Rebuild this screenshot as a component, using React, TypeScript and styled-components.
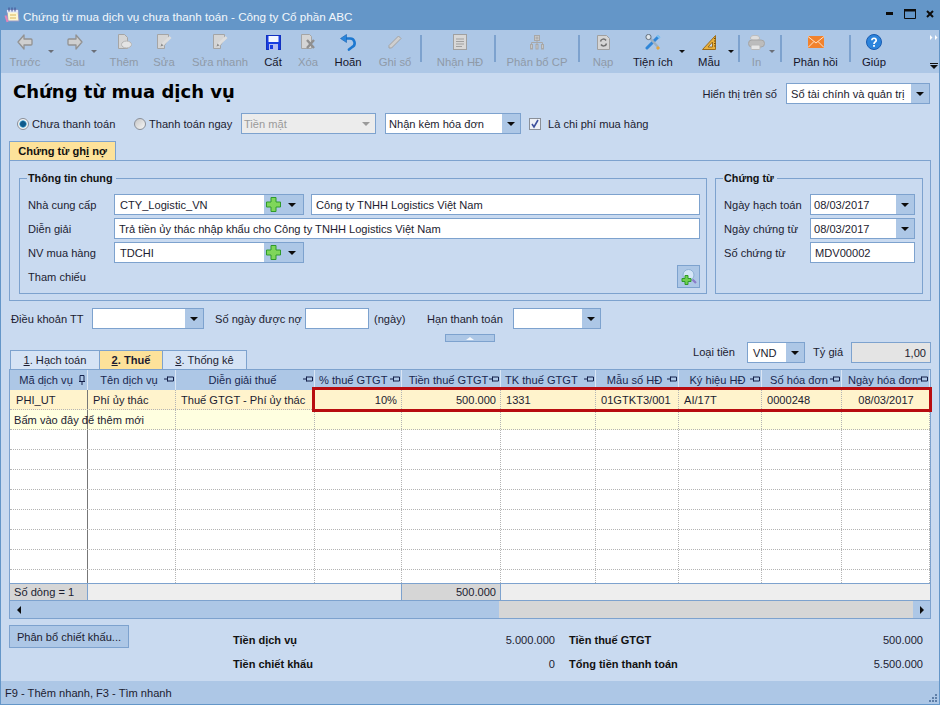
import React from "react";
import styled, { createGlobalStyle } from "styled-components";

const GlobalStyle = createGlobalStyle`
  html, body { margin: 0; padding: 0; background: #c9daf0; overflow: hidden; }
  * { box-sizing: border-box; }
  body { font-family: "Liberation Sans", Arial, sans-serif; font-size: 11.1px; color: #1c1c30; }
`;

const BORDER = "#7da2ce";
const BAR = "#adc7e6";
const BODY = "#c9daf0";

const Window = styled.div`
  width: 940px;
  height: 705px;
  display: flex;
  flex-direction: column;
  background: ${BODY};
  border-left: 1px solid #6496c8;
  border-right: 1px solid #6496c8;
  border-bottom: 1px solid #6496c8;
`;

const TitleBar = styled.div`
  height: 30px;
  flex: none;
  margin: 0 -1px;
  background: #6496c8;
  display: flex;
  align-items: center;
  padding-left: 4px;
  color: #f2f6fb;
  font-size: 11.7px;
`;
const TitleText = styled.span`
  margin-left: 3px;
  padding-top: 2px;
`;
const WindowButtons = styled.div`
  margin-left: auto;
  display: flex;
  align-items: center;
  gap: 10px;
  padding: 0 6px 2px 0;
`;

const Toolbar = styled.div`
  height: 43px;
  flex: none;
  background: ${BAR};
  display: flex;
  padding-left: 3px;
  font-size: 11.3px;
`;
const Tool = styled.div<{ $w: number; $off?: boolean }>`
  position: relative;
  width: ${(p) => p.$w}px;
  flex: none;
  display: flex;
  flex-direction: column;
  align-items: center;
  padding-top: 2px;
  color: ${(p) => (p.$off ? "#8f9aa8" : "#15152a")};
`;
const ToolIcon = styled.div`
  height: 20px;
  display: flex;
  align-items: center;
  justify-content: center;
`;
const ToolLabel = styled.div`
  margin-top: 2px;
  line-height: 16px;
  white-space: nowrap;
`;
const ToolCaret = styled.span<{ $left: number; $off?: boolean }>`
  position: absolute;
  top: 20px;
  left: ${(p) => p.$left}px;
  border-left: 3px solid transparent;
  border-right: 3px solid transparent;
  border-top: 3px solid ${(p) => (p.$off ? "#6a6f78" : "#101010")};
`;
const ToolSep = styled.div<{ $ml?: number; $mr?: number }>`
  width: 2px;
  flex: none;
  height: 27px;
  margin: 5px ${(p) => p.$mr ?? 0}px 0 ${(p) => p.$ml ?? 0}px;
  background: #7da2ce;
`;
const Overflow = styled.div`
  margin-left: auto;
  width: 14px;
  display: flex;
  flex-direction: column;
  justify-content: space-between;
  padding: 5px 0 4px 5px;
`;

const Content = styled.div`
  flex: 1;
  padding: 0 8px;
  display: flex;
  flex-direction: column;
  min-height: 0;
`;

const HeaderRow = styled.div`
  height: 40px;
  flex: none;
  display: flex;
  align-items: flex-start;
`;
const Heading = styled.h1`
  margin: 6px 0 0 4px;
  font-family: "DejaVu Sans", sans-serif;
  font-size: 18px;
  line-height: 26px;
  font-weight: 700;
  color: #000;
`;
const BookPicker = styled.div`
  margin-left: auto;
  margin-top: 10px;
  margin-right: 1px;
  display: flex;
  align-items: center;
  gap: 9px;
`;

const Options = styled.div`
  height: 21px;
  flex: none;
  display: flex;
  align-items: center;
  padding-left: 8px;
`;
const RadioLabel = styled.label<{ $w: number }>`
  width: ${(p) => p.$w}px;
  flex: none;
  display: flex;
  align-items: center;
  gap: 3px;
  white-space: nowrap;
`;
const RadioDot = styled.span<{ $on?: boolean }>`
  width: 12px;
  height: 12px;
  flex: none;
  border-radius: 50%;
  border: 1px solid #8a8f98;
  background: ${(p) =>
    p.$on
      ? "radial-gradient(circle, #0e5a8c 0 2.5px, #5ab0d8 3.4px, #f4f4f4 4px)"
      : "linear-gradient(135deg, #c8c8c8, #f6f6f6)"};
`;
const CheckBox = styled.span`
  width: 12px;
  height: 12px;
  flex: none;
  border: 1px solid #8a8f98;
  background: #eef1f6;
  display: flex;
  align-items: center;
  justify-content: center;
  margin: 0 7px 0 8px;
`;

const Field = styled.div<{ $w?: number; $bg?: string; $right?: boolean }>`
  ${(p) => (p.$w ? `width: ${p.$w}px; flex: none;` : "flex: 1;")}
  height: 21px;
  border: 1px solid ${BORDER};
  background: ${(p) => p.$bg ?? "#fff"};
  display: flex;
  align-items: center;
  padding: 0 4px;
  justify-content: ${(p) => (p.$right ? "flex-end" : "flex-start")};
  white-space: nowrap;
`;
const Combo = styled.div<{ $w: number; $off?: boolean }>`
  width: ${(p) => p.$w}px;
  flex: none;
  height: 21px;
  border: 1px solid ${BORDER};
  background: ${(p) => (p.$off ? "#ececec" : "#fff")};
  color: ${(p) => (p.$off ? "#9a9a9a" : "inherit")};
  display: flex;
  align-items: center;
  white-space: nowrap;
`;
const ComboText = styled.span<{ $pl?: number }>`
  flex: 1;
  padding-left: ${(p) => p.$pl ?? 4}px;
  overflow: hidden;
`;
const ComboButton = styled.span<{ $w?: number; $off?: boolean }>`
  width: ${(p) => p.$w ?? 18}px;
  height: 100%;
  flex: none;
  background: ${(p) => (p.$off ? "#ececec" : BAR)};
  display: flex;
  align-items: center;
  justify-content: ${(p) => (p.$w ? "space-between" : "center")};
  padding: ${(p) => (p.$w ? "0 7px 0 2px" : "0")};
`;
const Caret = styled.span<{ $off?: boolean }>`
  border-left: 4px solid transparent;
  border-right: 4px solid transparent;
  border-top: 4px solid ${(p) => (p.$off ? "#9a9a9a" : "#0c0c0c")};
`;

const DocTab = styled.div`
  margin-top: 7px;
  width: 107px;
  height: 19px;
  flex: none;
  background: #fde29a;
  border: 1px solid ${BORDER};
  border-bottom: none;
  display: flex;
  align-items: center;
  justify-content: center;
  font-weight: 700;
  font-size: 11.1px;
  color: #111;
  white-space: pre;
  u { text-decoration: underline; }
`;
const DocPanel = styled.div`
  height: 141px;
  flex: none;
  border: 1px solid ${BORDER};
  padding: 9px 7px 0 9px;
  display: flex;
  gap: 8px;
`;
const Group = styled.fieldset<{ $w?: number }>`
  margin: 0;
  height: 124px;
  min-width: 0;
  ${(p) => (p.$w ? `width: ${p.$w}px; flex: none;` : "flex: 1;")}
  border: 1px solid ${BORDER};
  padding: 8px 6px 0 8px;
  display: flex;
  flex-direction: column;
  gap: 3px;
`;
const GroupTitle = styled.legend`
  padding: 0 3px 0 1px;
  margin-left: -1px;
  font-weight: 700;
  font-size: 10.8px;
  line-height: 16px;
  color: #111;
`;
const FormRow = styled.div`
  height: 21px;
  flex: none;
  display: flex;
  align-items: center;
`;
const FormLabel = styled.span<{ $w: number }>`
  width: ${(p) => p.$w}px;
  flex: none;
  white-space: nowrap;
`;
const RowGap = styled.span<{ $w?: number }>`
  width: ${(p) => p.$w ?? 7}px;
  flex: none;
`;
const RefButton = styled.div`
  width: 23px;
  height: 23px;
  flex: none;
  margin-left: auto;
  background: ${BAR};
  border: 1px solid ${BORDER};
  display: flex;
  align-items: center;
  justify-content: center;
`;

const PaymentRow = styled.div`
  margin-top: 7px;
  height: 21px;
  flex: none;
  display: flex;
  align-items: center;
  padding-left: 2px;
  white-space: nowrap;
`;
const PayLabel = styled.span<{ $w: number }>`
  width: ${(p) => p.$w}px;
  flex: none;
`;
const Collapse = styled.div`
  width: 50px;
  height: 8px;
  flex: none;
  margin: 5px 0 0 436px;
  background: ${BAR};
  border: 1px solid ${BORDER};
  display: flex;
  align-items: center;
  justify-content: center;
`;
const CollapseArrow = styled.span`
  border-left: 4px solid transparent;
  border-right: 4px solid transparent;
  border-bottom: 3px solid #f5f8fc;
`;

const GridHead = styled.div`
  height: 27px;
  flex: none;
  display: flex;
  justify-content: space-between;
`;
const TabStrip = styled.div`
  align-self: flex-end;
  display: flex;
  padding-left: 1px;
`;
const GridTab = styled.div<{ $w: number; $on?: boolean }>`
  width: ${(p) => p.$w}px;
  height: 19px;
  background: ${(p) => (p.$on ? "#fde29a" : "#d5e3f5")};
  border: 1px solid ${BORDER};
  border-bottom: none;
  margin-right: -1px;
  display: flex;
  align-items: center;
  justify-content: center;
  font-weight: ${(p) => (p.$on ? 700 : 400)};
  white-space: pre;
`;
const RateBox = styled.div`
  display: flex;
  align-items: flex-start;
`;
const RateLabel = styled.span<{ $w: number; $pl?: number }>`
  width: ${(p) => p.$w}px;
  flex: none;
  padding-left: ${(p) => p.$pl ?? 0}px;
  line-height: 21px;
`;

const Grid = styled.div`
  position: relative;
  height: 250px;
  flex: none;
  border: 1px solid ${BORDER};
  display: flex;
  flex-direction: column;
`;
const columns = "78px 88px 139px 87px 99px 95px 83px 83px 80px 88px";
const HeaderCells = styled.div`
  height: 20px;
  flex: none;
  display: grid;
  grid-template-columns: ${columns};
  background: ${BAR};
  color: #1a2850;
`;
const HeaderCell = styled.div<{ $center?: boolean }>`
  display: flex;
  align-items: center;
  justify-content: ${(p) => (p.$center ? "center" : "flex-start")};
  padding: 0 9px 0 4px;
  border-right: 1px solid #dbe6f4;
  position: relative;
  white-space: nowrap;
  svg { position: absolute; right: 1px; top: 5px; }
`;
const Rows = styled.div`
  flex: 1;
  overflow: hidden;
  background: #fff;
`;
const Row = styled.div<{ $bg?: string }>`
  height: 20px;
  display: grid;
  grid-template-columns: ${columns};
  background: ${(p) => p.$bg ?? "#fff"};
  border-bottom: 1px dotted #b4b4b4;
`;
const Cell = styled.div<{ $align?: string; $pl?: number }>`
  display: flex;
  align-items: center;
  justify-content: ${(p) => p.$align ?? "flex-start"};
  padding: 0 4px 0 ${(p) => p.$pl ?? 5}px;
  border-right: 1px dotted #b4b4b4;
  white-space: nowrap;
  &:first-child { border-right: 1px solid #777; }
`;
const Highlight = styled.div`
  position: absolute;
  left: 302px;
  right: -2px;
  top: 17px;
  height: 25px;
  border: 3px solid #b80d10;
  pointer-events: none;
`;
const Summary = styled.div`
  height: 18px;
  flex: none;
  border-top: 1px solid ${BORDER};
  border-bottom: 1px solid ${BORDER};
  display: grid;
  grid-template-columns: 78px 314px 99px 1fr;
  background: #eeeeee;
`;
const SumCell = styled.div<{ $dark?: boolean; $right?: boolean }>`
  background: ${(p) => (p.$dark ? "#d6d6d6" : "#eeeeee")};
  display: flex;
  align-items: center;
  justify-content: ${(p) => (p.$right ? "flex-end" : "flex-start")};
  padding: 0 4px;
  border-right: 1px solid ${BORDER};
  &:last-child { border-right: none; }
`;
const ScrollBar = styled.div`
  height: 17px;
  flex: none;
  display: flex;
  background: ${BAR};
`;
const ScrollArrow = styled.span`
  width: 17px;
  flex: none;
  display: flex;
  align-items: center;
  justify-content: center;
`;
const ScrollThumb = styled.span`
  width: 472px;
  flex: none;
`;
const ScrollTrack = styled.span`
  flex: 1;
  background: #d6d6d6;
`;
const TriangleLeft = styled.span`
  border-top: 4px solid transparent;
  border-bottom: 4px solid transparent;
  border-right: 4px solid #0c0c0c;
`;
const TriangleRight = styled.span`
  border-top: 4px solid transparent;
  border-bottom: 4px solid transparent;
  border-left: 4px solid #0c0c0c;
`;

const Bottom = styled.div`
  flex: 1;
  display: flex;
  align-items: flex-start;
  padding-top: 6px;
`;
const DiscountButton = styled.div`
  width: 120px;
  height: 23px;
  flex: none;
  background: ${BAR};
  border: 1px solid ${BORDER};
  display: flex;
  align-items: center;
  justify-content: center;
`;
const Totals = styled.div`
  margin-left: 104px;
  margin-top: 3px;
  display: grid;
  grid-template-columns: 110px 212px 14px 110px 244px;
  grid-auto-rows: 24px;
  align-items: center;
`;
const TotalLabel = styled.span<{ $col: number }>`
  grid-column: ${(p) => p.$col};
  font-weight: 700;
  font-size: 11px;
  color: #111;
  white-space: nowrap;
`;
const TotalValue = styled.span<{ $col: number }>`
  grid-column: ${(p) => p.$col};
  text-align: right;
`;

const StatusBar = styled.div`
  position: relative;
  height: 23px;
  flex: none;
  background: ${BAR};
  display: flex;
  align-items: center;
  padding-left: 4px;
`;
const Grip = styled.svg`
  position: absolute;
  right: 1px;
  bottom: 1px;
`;

/* ---------- drawings ---------- */
const GREY = { f: "#cfcfcf", s: "#929292" };

const AppIcon = () => (
  <svg width="16" height="18" viewBox="0 0 16 18">
    <path d="M3 4h11l1 11H4z" fill="#fdf6cf" stroke="#9a9ac8" />
    <path d="M3 4h11v2.5H3z" fill="#dfe6fa" />
    <path d="M5 1.5v4M8 1.5v4M11 1.5v4" stroke="#3f4a8c" strokeWidth="1" />
    <path d="M6 9h6M6 12h6" stroke="#d9b45a" />
    <path d="M1.5 9.5 3.5 16" stroke="#e284b8" strokeWidth="2" />
  </svg>
);
const MinIcon = () => (
  <svg width="8" height="4" viewBox="0 0 8 4">
    <rect y="0" width="7" height="3" fill="#0c0c0c" />
  </svg>
);
const MaxIcon = () => (
  <svg width="12" height="10" viewBox="0 0 12 10">
    <path d="M.5 .5h11v9H.5z" fill="none" stroke="#0c0c0c" />
    <rect width="12" height="2.5" fill="#0c0c0c" />
  </svg>
);
const CloseIcon = () => (
  <svg width="8" height="8" viewBox="0 0 8 8">
    <path d="M1 1l6 6M7 1l-6 6" stroke="#0c0c0c" strokeWidth="2" />
  </svg>
);
const BackIcon = () => (
  <svg width="16" height="16" viewBox="0 0 16 16">
    <path d="M7 1 1 8l6 7V11h7a1 1 0 0 0 1-1V6a1 1 0 0 0-1-1H7z" fill={GREY.f} stroke={GREY.s} strokeWidth="1.3" strokeLinejoin="round" />
  </svg>
);
const NextIcon = () => (
  <svg width="16" height="16" viewBox="0 0 16 16">
    <path d="M9 1l6 7-6 7V11H2a1 1 0 0 1-1-1V6a1 1 0 0 1 1-1h7z" fill={GREY.f} stroke={GREY.s} strokeWidth="1.3" strokeLinejoin="round" />
  </svg>
);
const NewIcon = () => (
  <svg width="16" height="16" viewBox="0 0 16 16">
    <path d="M2.5 .5h6l3 3v11h-9z" fill="#d5d5d5" stroke="#a5a5a5" />
    <ellipse cx="10.5" cy="10.5" rx="5" ry="3.5" fill="#e4e4e4" stroke="#b5b5b5" />
  </svg>
);
const EditIcon = () => (
  <svg width="16" height="16" viewBox="0 0 16 16">
    <path d="M1.5 .5h11v4l-4 7v3h-7z" fill="#d5d5d5" stroke="#a5a5a5" />
    <path d="M5 12 14.5 3" stroke="#dedede" strokeWidth="3" />
    <path d="M4.5 12.5l1-3 2 2z" fill="#8c8c8c" />
  </svg>
);
const SaveIcon = () => (
  <svg width="15" height="15" viewBox="0 0 15 15">
    <rect x=".5" y=".5" width="14" height="14" fill="#1a3ee0" stroke="#1230c0" />
    <rect x="2.5" y="1" width="10" height="6" fill="#f4f7ff" />
    <rect x="3" y="9" width="9" height="6" fill="#b4bdf0" />
    <rect x="4" y="10" width="3" height="4" fill="#1a3ee0" />
  </svg>
);
const DeleteIcon = () => (
  <svg width="16" height="16" viewBox="0 0 16 16">
    <path d="M1.5 .5h8l2 2v12h-10z" fill="#d5d5d5" stroke="#a5a5a5" />
    <path d="M7 6l7 8M14 6l-7 8" stroke="#8f8f8f" strokeWidth="2.4" />
  </svg>
);
const UndoIcon = () => (
  <svg width="16" height="17" viewBox="0 0 16 17">
    <path d="M6 4.5h3.5a4.6 4.6 0 0 1 2.3 8.8L9 15.6" fill="none" stroke="#1d78d0" strokeWidth="2.6" strokeLinecap="round" />
    <path d="M.5 4.5 6.5 .5v8z" fill="#2a86dc" stroke="#1560b0" strokeWidth=".6" />
  </svg>
);
const PencilIcon = () => (
  <svg width="16" height="16" viewBox="0 0 16 16">
    <path d="M2 11.5 11.5 2l2.5 2.5L4.5 14H2z" fill="#cfcfcf" stroke="#a3a3a3" />
  </svg>
);
const ReceiveIcon = () => (
  <svg width="14" height="16" viewBox="0 0 14 16">
    <rect x=".5" y=".5" width="13" height="15" fill="#d8d8d8" stroke="#a0a0a0" />
    <path d="M3 5h8M3 7.5h8M3 10h8M3 12.5h6" stroke="#a0a0a0" />
  </svg>
);
const AllocIcon = () => (
  <svg width="16" height="16" viewBox="0 0 16 16" fill="none" stroke="#a8a8a8">
    <rect x="5.5" y="1.5" width="5" height="5" fill="#c8c8c8" />
    <path d="M8 7v3M2.5 10V8.5h11V10M8 2.5v3M6.5 4h3" />
    <rect x="1.5" y="10.5" width="2" height="4.5" fill="#c8c8c8" />
    <rect x="7" y="10.5" width="2" height="4.5" fill="#c8c8c8" />
    <rect x="12.5" y="10.5" width="2" height="4.5" fill="#c8c8c8" />
  </svg>
);
const ReloadIcon = () => (
  <svg width="13" height="15" viewBox="0 0 13 15">
    <path d="M.5 .5h9l3 3v11H.5z" fill="#d5d5d5" stroke="#a0a0a0" />
    <path d="M3.5 6.5a3 3 0 0 1 5.5-1M9.5 8.5a3 3 0 0 1-5.5 1" fill="none" stroke="#6f6f6f" strokeWidth="1.5" />
  </svg>
);
const ToolsIcon = () => (
  <svg width="16" height="16" viewBox="0 0 16 16">
    <path d="M2 14 13 3" stroke="#2f86d8" strokeWidth="3" strokeLinecap="round" />
    <path d="M4 3l9 10" stroke="#9db0c2" strokeWidth="2.4" />
    <circle cx="3.5" cy="3" r="2.6" fill="#dfe6ec" stroke="#64707c" />
    <path d="M12 13l2 2" stroke="#e6a43a" strokeWidth="3" />
    <path d="M12 1.5l3 2.5" stroke="#7cc0f0" strokeWidth="2" />
  </svg>
);
const RulerIcon = () => (
  <svg width="15" height="15" viewBox="0 0 15 15">
    <path d="M13.5 .5v14H.5z" fill="#e9b13c" stroke="#9a6c1c" />
    <path d="M10.5 7v5H6z" fill="#c9daf0" stroke="#9a6c1c" />
    <path d="M12 3.5h1.5M12 6h1.5M12 8.5h1.5M12 11h1.5" stroke="#6d4a10" />
  </svg>
);
const PrinterIcon = () => (
  <svg width="17" height="15" viewBox="0 0 17 15">
    <ellipse cx="7" cy="3" rx="4.5" ry="2.6" fill="#dedede" stroke="#bcbcbc" />
    <rect x=".5" y="5" width="16" height="7" rx="3.4" fill="#bcbcbc" stroke="#a4a4a4" />
    <rect x="3" y="10" width="9" height="4.5" rx="1" fill="#e6e6e6" stroke="#b8b8b8" />
  </svg>
);
const MailIcon = () => (
  <svg width="16" height="12" viewBox="0 0 16 12">
    <rect width="16" height="12" fill="#f2822c" />
    <path d="M0 .5 8 7l8-6.5M0 11.5 6 5.5M16 11.5l-6-6" fill="none" stroke="#fde3c8" />
  </svg>
);
const HelpIcon = () => (
  <svg width="16" height="16" viewBox="0 0 16 16">
    <circle cx="8" cy="8" r="7.5" fill="#2c84dc" stroke="#1a5cb0" />
    <path d="M5.8 6.2a2.2 2 0 1 1 3.3 1.8C8.2 8.6 8 9 8 10" fill="none" stroke="#fff" strokeWidth="1.7" />
    <rect x="7.1" y="11" width="1.8" height="1.8" fill="#fff" />
  </svg>
);
const PlusIcon = () => (
  <svg width="15" height="15" viewBox="0 0 15 15">
    <path d="M5 .5h5V5h4.5v5H10v4.5H5V10H.5V5H5z" fill="#7fd65a" stroke="#2f9a2a" />
  </svg>
);
const SearchPlusIcon = () => (
  <svg width="16" height="16" viewBox="0 0 16 16">
    <circle cx="7.5" cy="6" r="5.5" fill="#d4e6f7" stroke="#8db0d4" />
    <path d="M11.5 10.5l3.5 3.5" stroke="#8a7cc8" strokeWidth="2.2" />
    <path d="M4 6.5h3v3h3v3H7v3H4v-3H1v-3h3z" fill="#6fd050" stroke="#2f9a2a" />
  </svg>
);
const PinH = () => (
  <svg width="10" height="8" viewBox="0 0 10 8">
    <path d="M0 4h3M3.5 1.5v5M3.5 2h6v4h-6" fill="none" stroke="#14204a" />
  </svg>
);
const PinV = () => (
  <svg width="8" height="10" viewBox="0 0 8 10">
    <path d="M4 10V7M1 6.5h6M2 .5v6M6 .5v6M2 .5h4" fill="none" stroke="#14204a" />
  </svg>
);
const CheckMark = () => (
  <svg width="10" height="10" viewBox="0 0 10 10">
    <path d="M2 5l2 3 4-7" fill="none" stroke="#3c4f9c" strokeWidth="1.6" />
  </svg>
);
const OverflowMark = () => (
  <svg width="8" height="5" viewBox="0 0 8 5">
    <path d="M0 0l2.5 2.5L0 5zM5 0l2.5 2.5L5 5z" fill="#fff" />
  </svg>
);
const OverflowMenu = () => (
  <svg width="8" height="6" viewBox="0 0 8 6">
    <path d="M0 0h8v1H0zM0 2h8L4 6z" fill="#101010" />
  </svg>
);

type ToolDef = { label: string; w: number; icon: React.ReactNode; off?: boolean; caret?: number; sep?: { ml?: number; mr?: number } };
const tools: ToolDef[] = [
  { label: "Trước", w: 42, icon: <BackIcon />, off: true, caret: 44 },
  { label: "Sau", w: 58, icon: <NextIcon />, off: true, caret: 45 },
  { label: "Thêm", w: 40, icon: <NewIcon />, off: true },
  { label: "Sửa", w: 40, icon: <EditIcon />, off: true },
  { label: "Sửa nhanh", w: 72, icon: <EditIcon />, off: true },
  { label: "Cất", w: 34, icon: <SaveIcon /> },
  { label: "Xóa", w: 36, icon: <DeleteIcon />, off: true },
  { label: "Hoãn", w: 44, icon: <UndoIcon /> },
  { label: "Ghi sổ", w: 50, icon: <PencilIcon />, off: true, sep: { mr: 4 } },
  { label: "Nhận HĐ", w: 68, icon: <ReceiveIcon />, off: true, sep: {} },
  { label: "Phân bổ CP", w: 82, icon: <AllocIcon />, off: true, sep: {} },
  { label: "Nạp", w: 46, icon: <ReloadIcon />, off: true },
  { label: "Tiện ích", w: 54, icon: <ToolsIcon />, caret: 53 },
  { label: "Mẫu", w: 58, icon: <RulerIcon />, caret: 48, sep: {} },
  { label: "In", w: 33, icon: <PrinterIcon />, off: true, caret: 29, sep: { ml: 7 } },
  { label: "Phản hồi", w: 67, icon: <MailIcon />, sep: {} },
  { label: "Giúp", w: 46, icon: <HelpIcon /> },
];

const headers = [
  "Mã dịch vụ", "Tên dịch vụ", "Diễn giải thuế", "% thuế GTGT", "Tiền thuế GTGT",
  "TK thuế GTGT", "Mẫu số HĐ", "Ký hiệu HĐ", "Số hóa đơn", "Ngày hóa đơn",
];
const emptyCells = Array.from({ length: 10 });
const blankRows = Array.from({ length: 9 });

export default function App() {
  return (
    <Window>
      <GlobalStyle />
      <TitleBar>
        <AppIcon />
        <TitleText>Chứng từ mua dịch vụ chưa thanh toán - Công ty Cổ phần ABC</TitleText>
        <WindowButtons>
          <MinIcon />
          <MaxIcon />
          <CloseIcon />
        </WindowButtons>
      </TitleBar>

      <Toolbar>
        {tools.map((t) => (
          <React.Fragment key={t.label}>
            <Tool $w={t.w} $off={t.off}>
              <ToolIcon>{t.icon}</ToolIcon>
              <ToolLabel>{t.label}</ToolLabel>
              {t.caret !== undefined && <ToolCaret $left={t.caret} $off={t.off} />}
            </Tool>
            {t.sep && <ToolSep $ml={t.sep.ml} $mr={t.sep.mr} />}
          </React.Fragment>
        ))}
        <Overflow>
          <OverflowMark />
          <OverflowMenu />
        </Overflow>
      </Toolbar>

      <Content>
        <HeaderRow>
          <Heading>Chứng từ mua dịch vụ</Heading>
          <BookPicker>
            <span>Hiển thị trên số</span>
            <Combo $w={144}>
              <ComboText>Sổ tài chính và quản trị</ComboText>
              <ComboButton><Caret /></ComboButton>
            </Combo>
          </BookPicker>
        </HeaderRow>

        <Options>
          <RadioLabel $w={117}>
            <RadioDot $on />
            Chưa thanh toán
          </RadioLabel>
          <RadioLabel $w={107}>
            <RadioDot />
            Thanh toán ngay
          </RadioLabel>
          <Combo $w={135} $off>
            <ComboText $pl={2}>Tiền mặt</ComboText>
            <ComboButton $off><Caret $off /></ComboButton>
          </Combo>
          <RowGap $w={9} />
          <Combo $w={136}>
            <ComboText $pl={3}>Nhận kèm hóa đơn</ComboText>
            <ComboButton><Caret /></ComboButton>
          </Combo>
          <CheckBox><CheckMark /></CheckBox>
          <span>Là chi phí mua hàng</span>
        </Options>

        <DocTab>Chứng từ gh<u>i</u> nợ</DocTab>
        <DocPanel>
          <Group>
            <GroupTitle>Thông tin chung</GroupTitle>
            <FormRow>
              <FormLabel $w={86}>Nhà cung cấp</FormLabel>
              <Combo $w={190}>
                <ComboText $pl={5}>CTY_Logistic_VN</ComboText>
                <ComboButton $w={39}><PlusIcon /><Caret /></ComboButton>
              </Combo>
              <RowGap />
              <Field>Công ty TNHH Logistics Việt Nam</Field>
            </FormRow>
            <FormRow>
              <FormLabel $w={86}>Diễn giải</FormLabel>
              <Field>Trả tiền ủy thác nhập khẩu cho Công ty TNHH Logistics Việt Nam</Field>
            </FormRow>
            <FormRow>
              <FormLabel $w={86}>NV mua hàng</FormLabel>
              <Combo $w={190}>
                <ComboText $pl={5}>TDCHI</ComboText>
                <ComboButton $w={39}><PlusIcon /><Caret /></ComboButton>
              </Combo>
            </FormRow>
            <FormRow>
              <FormLabel $w={86}>Tham chiếu</FormLabel>
              <RefButton><SearchPlusIcon /></RefButton>
            </FormRow>
          </Group>
          <Group $w={208}>
            <GroupTitle>Chứng từ</GroupTitle>
            <FormRow>
              <FormLabel $w={86}>Ngày hạch toán</FormLabel>
              <Combo $w={105}>
                <ComboText $pl={3}>08/03/2017</ComboText>
                <ComboButton><Caret /></ComboButton>
              </Combo>
            </FormRow>
            <FormRow>
              <FormLabel $w={86}>Ngày chứng từ</FormLabel>
              <Combo $w={105}>
                <ComboText $pl={3}>08/03/2017</ComboText>
                <ComboButton><Caret /></ComboButton>
              </Combo>
            </FormRow>
            <FormRow>
              <FormLabel $w={86}>Số chứng từ</FormLabel>
              <Field $w={105}>MDV00002</Field>
            </FormRow>
          </Group>
        </DocPanel>

        <PaymentRow>
          <PayLabel $w={81}>Điều khoản TT</PayLabel>
          <Combo $w={112}><ComboText /><ComboButton><Caret /></ComboButton></Combo>
          <RowGap $w={11} />
          <PayLabel $w={90}>Số ngày được nợ</PayLabel>
          <Field $w={64} />
          <RowGap $w={5} />
          <PayLabel $w={53}>(ngày)</PayLabel>
          <PayLabel $w={86}>Hạn thanh toán</PayLabel>
          <Combo $w={88}><ComboText /><ComboButton><Caret /></ComboButton></Combo>
        </PaymentRow>
        <Collapse><CollapseArrow /></Collapse>

        <GridHead>
          <TabStrip>
            <GridTab $w={90}><u>1</u>. Hạch toán</GridTab>
            <GridTab $w={64} $on><u>2</u>. Thuế</GridTab>
            <GridTab $w={85}><u>3</u>. Thống kê</GridTab>
          </TabStrip>
          <RateBox>
            <RateLabel $w={54}>Loại tiền</RateLabel>
            <Combo $w={58}>
              <ComboText $pl={5}>VND</ComboText>
              <ComboButton><Caret /></ComboButton>
            </Combo>
            <RateLabel $w={46} $pl={8}>Tỷ giá</RateLabel>
            <Field $w={80} $bg="#e4e4e4" $right>1,00</Field>
          </RateBox>
        </GridHead>

        <Grid>
          <HeaderCells>
            {headers.map((h, i) => (
              <HeaderCell key={h} $center={i !== 3 && i !== 5}>
                {h}
                {i === 0 ? <PinV /> : <PinH />}
              </HeaderCell>
            ))}
          </HeaderCells>
          <Rows>
            <Row $bg="#fff3cc">
              <Cell $pl={6}>PHI_UT</Cell>
              <Cell>Phí ủy thác</Cell>
              <Cell>Thuế GTGT - Phí ủy thác</Cell>
              <Cell $align="flex-end">10%</Cell>
              <Cell $align="flex-end">500.000</Cell>
              <Cell>1331</Cell>
              <Cell>01GTKT3/001</Cell>
              <Cell>AI/17T</Cell>
              <Cell>0000248</Cell>
              <Cell $align="center">08/03/2017</Cell>
            </Row>
            <Row $bg="#ffffe0">
              {emptyCells.map((_, i) => (
                <Cell key={i} $pl={4}>{i === 0 ? "Bấm vào đây để thêm mới" : ""}</Cell>
              ))}
            </Row>
            {blankRows.map((_, r) => (
              <Row key={r}>
                {emptyCells.map((_, i) => <Cell key={i} />)}
              </Row>
            ))}
          </Rows>
          <Summary>
            <SumCell $dark>Số dòng = 1</SumCell>
            <SumCell />
            <SumCell $dark $right>500.000</SumCell>
            <SumCell />
          </Summary>
          <ScrollBar>
            <ScrollArrow><TriangleLeft /></ScrollArrow>
            <ScrollThumb />
            <ScrollTrack />
            <ScrollArrow><TriangleRight /></ScrollArrow>
          </ScrollBar>
          <Highlight />
        </Grid>

        <Bottom>
          <DiscountButton>Phân bổ chiết khấu...</DiscountButton>
          <Totals>
            <TotalLabel $col={1}>Tiền dịch vụ</TotalLabel>
            <TotalValue $col={2}>5.000.000</TotalValue>
            <TotalLabel $col={4}>Tiền thuế GTGT</TotalLabel>
            <TotalValue $col={5}>500.000</TotalValue>
            <TotalLabel $col={1}>Tiền chiết khấu</TotalLabel>
            <TotalValue $col={2}>0</TotalValue>
            <TotalLabel $col={4}>Tổng tiền thanh toán</TotalLabel>
            <TotalValue $col={5}>5.500.000</TotalValue>
          </Totals>
        </Bottom>
      </Content>

      <StatusBar>
        F9 - Thêm nhanh, F3 - Tìm nhanh
        <Grip width="10" height="10" viewBox="0 0 10 10">
          <path d="M7 1h2v2H7zM4 4h2v2H4zM7 4h2v2H7zM1 7h2v2H1zM4 7h2v2H4zM7 7h2v2H7z" fill="#5f7fa8" />
        </Grip>
      </StatusBar>
    </Window>
  );
}
